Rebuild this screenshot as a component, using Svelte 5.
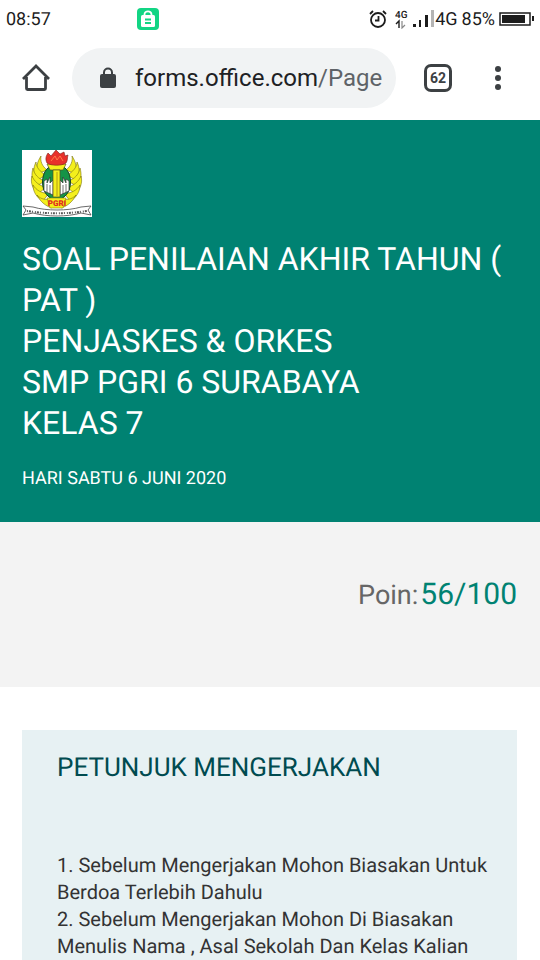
<script>
    let title = ['SOAL PENILAIAN AKHIR TAHUN ( PAT )', 'PENJASKES & ORKES', 'SMP PGRI 6 SURABAYA', 'KELAS 7'];
    let score = 56;
    let total = 100;
    let tabs = 62;
    let rules = [
        '1. Sebelum Mengerjakan Mohon Biasakan Untuk Berdoa Terlebih Dahulu',
        '2. Sebelum Mengerjakan Mohon Di Biasakan Menulis Nama , Asal Sekolah Dan Kelas Kalian'
    ];
</script>

<div class="screen">
    <div class="status">
        <span class="time">08:57</span>
        <svg class="app" width="22" height="22" viewBox="0 0 22 22">
            <rect width="22" height="22" rx="4" fill="#12d584" />
            <path d="M7.500 8V6.500a3.500 3.200 0 0 1 7 0V8" fill="none" stroke="#fff" stroke-width="1.800" />
            <rect x="4" y="7" width="14" height="12" rx="1.500" fill="#fff" />
            <path d="M8 11.500h6M8 15h6" stroke="#12d584" stroke-width="1.800" />
        </svg>
        <div class="signals">
            <svg width="18" height="18" viewBox="0 0 18 18" fill="none" stroke="#1c1c1c" stroke-width="1.800">
                <circle cx="9" cy="10" r="7" />
                <path d="M9.500 6v4.500H6" />
                <path d="M1 4l3-3M14 1l3 3" />
            </svg>
            <svg class="data" width="14" height="20" viewBox="0 0 14 20">
                <text x="0" y="9" font-size="10" font-weight="500" fill="#1c1c1c">4G</text>
                <path d="M4 19v-7l-3 3" fill="none" stroke="#1c1c1c" stroke-width="1.400" />
                <path d="M7 12v7l3-3" fill="none" stroke="#888" stroke-width="1.200" />
            </svg>
            <svg width="22" height="20" viewBox="0 0 22 20">
                <path d="M0 15h3v3H0zM6 11h2v7H6zM12 6h3v12h-3z" fill="#1c1c1c" />
                <path d="M18 1h3v17h-3z" fill="#b4b4b4" />
            </svg>
            <span class="network">4G</span>
            <span>85%</span>
            <svg class="battery" width="35" height="14" viewBox="0 0 35 14">
                <rect x="1" y="1" width="30" height="12" fill="none" stroke="#1c1c1c" stroke-width="1.500" />
                <rect x="3" y="3" width="23" height="8" fill="#1c1c1c" />
                <path d="M33 4h2v5h-2z" fill="#1c1c1c" />
            </svg>
        </div>
    </div>

    <nav>
        <button class="home" aria-label="Home">
            <svg width="28" height="28" viewBox="0 0 28 28" fill="none" stroke="#3c4043" stroke-width="2.800">
                <path d="M1 15L14 2 27 15" />
                <path d="M4.500 13V24.500a1 1 0 0 0 1 1H22.500a1 1 0 0 0 1-1V13" />
            </svg>
        </button>
        <button class="address">
            <svg width="16" height="22" viewBox="0 0 16 22">
                <path d="M4 8V5.500a4 4 0 0 1 8 0V8" fill="none" stroke="#3c4043" stroke-width="2" />
                <rect y="7" width="16" height="14" rx="2" fill="#3c4043" />
            </svg>
            <span class="url">forms.office.com<span class="path">/Page</span></span>
        </button>
        <button class="tabs">{tabs}</button>
        <button class="menu" aria-label="Menu">
            <svg width="6" height="26" viewBox="0 0 6 26" fill="#3c4043">
                <circle cx="3" cy="4" r="3" />
                <circle cx="3" cy="13" r="3" />
                <circle cx="3" cy="22" r="3" />
            </svg>
        </button>
    </nav>

    <header>
        <svg class="logo" width="70" height="67" viewBox="0 0 70 67">
            <rect width="70" height="67" fill="#fff" />
            <!-- wings -->
            <g fill="#f4ef1c" stroke="#77700f" stroke-width=".6">
                <path d="M19 6C15 12 14 18 15 24L25 20C20 16 18 11 19 6z" />
                <path d="M14 12C11 18 11 25 14 31L24 25C18 22 14 17 14 12z" />
                <path d="M11 18C9 25 10 31 13 37L23 31C16 29 12 24 11 18z" />
                <path d="M10 26C8 33 11 39 16 44L24 37C17 36 12 31 10 26z" />
                <path d="M11 35C11 42 15 48 21 51L27 43C20 44 14 40 11 35z" />
                <path d="M15 45C18 51 23 56 30 58L33 47C27 51 19 50 15 45z" />
                <path d="M50 6C54 12 55 18 54 24L44 20C49 16 51 11 50 6z" />
                <path d="M55 12C58 18 58 25 55 31L45 25C51 22 55 17 55 12z" />
                <path d="M58 18C60 25 59 31 56 37L46 31C53 29 57 24 58 18z" />
                <path d="M59 26C61 33 58 39 53 44L45 37C52 36 57 31 59 26z" />
                <path d="M58 35C58 42 54 48 48 51L42 43C49 44 55 40 58 35z" />
                <path d="M54 45C51 51 46 56 39 58L36 47C42 51 50 50 54 45z" />
            </g>
            <ellipse cx="34.500" cy="32" rx="14" ry="18" fill="#159447" stroke="#173f24" />
            <!-- open books -->
            <g fill="#fff" stroke="#333" stroke-width=".7">
                <path d="M22 31l3-2v4l3-6v6l3-3v15l-9-4z" />
                <path d="M47 31l-3-2v4l-3-6v6l-3-3v15l9-4z" />
                <path d="M25 34v8M28 35v9M44 34v8M41 35v9" />
            </g>
            <!-- torch -->
            <path d="M25 14h19l-3 6H28z" fill="#f4ef1c" stroke="#555020" stroke-width=".7" />
            <path d="M31 20h7v27h-7z" fill="#f4ef1c" stroke="#555020" stroke-width=".7" />
            <path d="M35 22v24" stroke="#b49c14" />
            <path d="M25 13C23 9 24 6 26 3l3 3 5-6 4 4 4-2 1 4 3-1c-1 3 0 5-2 8-4 3-15 3-19 0z" fill="#e8302a" stroke="#792018" stroke-width=".6" />
            <path d="M29 11l4-5 2 4 3-4 3 5" fill="none" stroke="#ff7a45" />
            <path d="M25 48h19l-3 10H28z" fill="#f4ef1c" stroke="#8a8412" stroke-width=".6" />
            <text x="35" y="56" font-size="8" font-weight="900" text-anchor="middle" fill="#e22b20">PGRI</text>
            <!-- ribbon -->
            <path d="M1 56l10 1c13 4 35 4 48 0l10-1-3 4 3 5-10-2c-14 4-34 4-48 0L1 65l3-5z" fill="#fff" stroke="#444" stroke-width=".8" />
            <path d="M5 61c19 3 40 3 60 0" fill="none" stroke="#555" stroke-width="2" stroke-dasharray="1 1 2 1 1 2" />
        </svg>
        <h1>
            {#each title as line}
                <span>{line}</span>
            {/each}
        </h1>
        <p>HARI SABTU 6 JUNI 2020</p>
    </header>

    <section class="score">
        <span class="label">Poin:</span>
        <span class="points">{score}/{total}</span>
    </section>

    <main>
        <article>
            <h2>PETUNJUK MENGERJAKAN</h2>
            {#each rules as rule}
                <p>{rule}</p>
            {/each}
        </article>
    </main>
</div>

<style>
    :global(body) {
        background: #fff;
        font-family: Roboto, "Liberation Sans", sans-serif;
        text-rendering: geometricPrecision;
    }
    .screen {
        display: flex;
        flex-direction: column;
        height: 100vh;
        overflow: hidden;
    }
    h1, h2, p {
        margin: 0;
        font-weight: 400;
    }
    button {
        display: flex;
        align-items: center;
        justify-content: center;
        flex: none;
        padding: 0;
        border: 0;
        background: none;
        font-family: inherit;
        color: #3c4043;
    }
    .status {
        display: flex;
        align-items: center;
        flex: none;
        height: 38px;
        padding: 0 6px;
        font-size: 18px;
        color: #1c1c1c;
    }
    .time {
        width: 131px;
    }
    .signals {
        display: flex;
        align-items: center;
        gap: 4px;
        margin-left: auto;
    }
    .data {
        margin-left: 4px;
    }
    .network {
        margin-left: -4px;
    }
    nav {
        display: flex;
        align-items: center;
        flex: none;
        height: 82px;
        padding: 0 28px 2px 22px;
        box-sizing: border-box;
    }
    .address {
        flex: 1;
        justify-content: flex-start;
        gap: 19px;
        height: 60px;
        margin: 0 28px 0 22px;
        padding: 0 8px 0 28px;
        border-radius: 30px;
        background: #f1f3f4;
        overflow: hidden;
    }
    .address svg {
        flex: none;
    }
    .url {
        font-size: 24px;
        color: #202124;
        white-space: nowrap;
    }
    .path {
        color: #5f6368;
    }
    .tabs {
        width: 28px;
        height: 28px;
        border: 3px solid #3c4043;
        border-radius: 7px;
        box-sizing: border-box;
        font-size: 14px;
        font-weight: 700;
    }
    .menu {
        width: 28px;
        margin-left: 32px;
    }
    header {
        flex: none;
        height: 402px;
        padding: 30px 22px 0;
        box-sizing: border-box;
        background: #008272;
        color: #fff;
    }
    .logo {
        display: block;
    }
    h1 {
        margin-top: 22px;
        font-size: 32px;
        line-height: 41px;
    }
    h1 span {
        display: block;
    }
    header p {
        margin-top: 23px;
        font-size: 18px;
        line-height: 24px;
    }
    .score {
        display: flex;
        align-items: baseline;
        justify-content: flex-end;
        gap: 2px;
        flex: none;
        height: 165px;
        padding: 55px 23px 0;
        box-sizing: border-box;
        background: #f3f3f3;
    }
    .label {
        font-size: 27px;
        color: #666;
    }
    .points {
        font-size: 30px;
        color: #008272;
    }
    main {
        display: flex;
        flex: 1;
        min-height: 0;
        padding: 43px 23px 0 22px;
    }
    article {
        flex: 1;
        padding: 21px 24px 20px 35px;
        background: #e7f1f3;
    }
    h2 {
        margin-bottom: 67px;
        font-size: 26px;
        line-height: 34px;
        color: #004b50;
    }
    article p {
        font-size: 20px;
        line-height: 27px;
        color: #333;
    }
</style>
